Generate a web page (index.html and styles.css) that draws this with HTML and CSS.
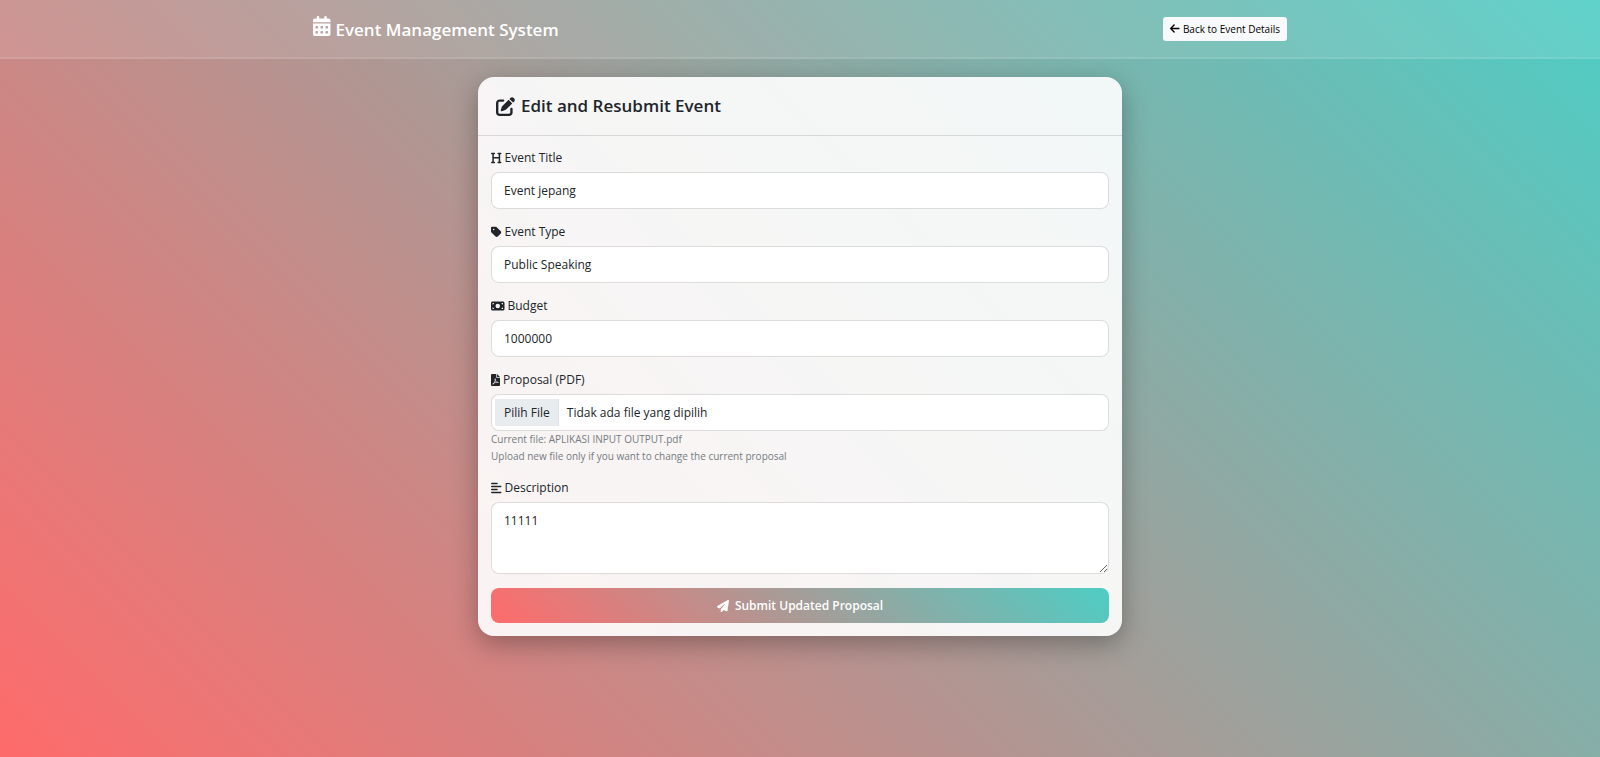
FILE: index.html
```html
<!DOCTYPE html>
<html lang="en">
<head>
<meta charset="utf-8">
<meta name="viewport" content="width=device-width, initial-scale=1">
<title>Edit and Resubmit Event</title>
<link rel="stylesheet" href="styles.css">
</head>
<body>
<header class="navbar">
  <div class="navbar-inner">
    <a class="brand" href="#">
      <svg class="icon" viewBox="0 0 448 512" aria-hidden="true"><path fill-rule="evenodd" d="M96 32a32 32 0 0 1 64 0v32h128V32a32 32 0 0 1 64 0v32h48c26.500 0 48 21.500 48 48v48H0v-48c0-26.500 21.500-48 48-48h48V32zM0 192h448v272c0 26.500-21.500 48-48 48H48c-26.500 0-48-21.500-48-48V192zm64 80v32c0 8.800 7.200 16 16 16h32c8.800 0 16-7.200 16-16v-32c0-8.800-7.200-16-16-16H80c-8.800 0-16 7.200-16 16zm128 0v32c0 8.800 7.200 16 16 16h32c8.800 0 16-7.200 16-16v-32c0-8.800-7.200-16-16-16h-32c-8.800 0-16 7.200-16 16zm144-16c-8.800 0-16 7.200-16 16v32c0 8.800 7.200 16 16 16h32c8.800 0 16-7.200 16-16v-32c0-8.800-7.200-16-16-16h-32zM64 400v32c0 8.800 7.200 16 16 16h32c8.800 0 16-7.200 16-16v-32c0-8.800-7.200-16-16-16H80c-8.800 0-16 7.200-16 16zm144-16c-8.800 0-16 7.200-16 16v32c0 8.800 7.200 16 16 16h32c8.800 0 16-7.200 16-16v-32c0-8.800-7.200-16-16-16h-32zm112 16v32c0 8.800 7.200 16 16 16h32c8.800 0 16-7.200 16-16v-32c0-8.800-7.200-16-16-16h-32c-8.800 0-16 7.200-16 16z"/></svg>
      <span>Event Management System</span>
    </a>
    <a class="back" href="#">
      <svg class="icon" viewBox="0 0 448 512" aria-hidden="true"><path d="M9.400 233.400c-12.500 12.500-12.500 32.800 0 45.300l160 160c12.500 12.500 32.800 12.500 45.300 0s12.500-32.800 0-45.300L109.200 288H416c17.700 0 32-14.300 32-32s-14.300-32-32-32H109.300l105.400-105.400c12.500-12.500 12.500-32.800 0-45.300s-32.800-12.500-45.300 0l-160 160z"/></svg>
      <span>Back to Event Details</span>
    </a>
  </div>
</header>
<main class="page">
  <section class="card">
    <h1 class="card-title">
      <svg class="icon" viewBox="0 0 512 512" aria-hidden="true"><path d="M471.600 21.700c-21.900-21.900-57.300-21.900-79.200 0L362.300 51.700l97.900 97.900 30.100-30.100c21.900-21.900 21.900-57.300 0-79.200L471.600 21.700zM172.400 241.700c-6.100 6.100-10.800 13.600-13.500 21.900l-29.600 88.800c-2.900 8.600-.6 18.100 5.800 24.600s15.900 8.700 24.600 5.800l88.800-29.600c8.200-2.800 15.700-7.400 21.900-13.500L437.700 172.300 339.700 74.300 172.400 241.700zM96 64C43 64 0 107 0 160v256c0 53 43 96 96 96h256c53 0 96-43 96-96v-96c0-17.700-14.300-32-32-32s-32 14.300-32 32v96c0 17.700-14.300 32-32 32H96c-17.700 0-32-14.300-32-32V160c0-17.700 14.300-32 32-32h96c17.700 0 32-14.300 32-32s-14.300-32-32-32H96z"/></svg>
      <span>Edit and Resubmit Event</span>
    </h1>
    <form class="form">
      <div class="field">
        <label class="label" for="title">
          <svg class="icon" viewBox="0 0 448 512" aria-hidden="true"><path d="M0 64c0-17.700 14.300-32 32-32h112c17.700 0 32 14.300 32 32s-14.300 32-32 32h-24v112h208V96h-24c-17.700 0-32-14.300-32-32s14.300-32 32-32h112c17.700 0 32 14.300 32 32s-14.300 32-32 32h-24v320h24c17.700 0 32 14.300 32 32s-14.300 32-32 32H304c-17.700 0-32-14.300-32-32s14.300-32 32-32h24V272H120v144h24c17.700 0 32 14.300 32 32s-14.300 32-32 32H32c-17.700 0-32-14.300-32-32s14.300-32 32-32h24V96H32C14.300 96 0 81.700 0 64z"/></svg>
          <span>Event Title</span>
        </label>
        <input class="control" id="title" type="text" value="Event jepang">
      </div>
      <div class="field">
        <label class="label" for="type">
          <svg class="icon" viewBox="0 0 448 512" aria-hidden="true"><path d="M0 80v149.500c0 17 6.700 33.300 18.700 45.300l176 176c25 25 65.500 25 90.500 0l133.500-133.500c25-25 25-65.500 0-90.500l-176-176c-12-12-28.300-18.700-45.300-18.700H48C21.500 32 0 53.500 0 80zm112 32a32 32 0 1 1 0 64 32 32 0 1 1 0-64z"/></svg>
          <span>Event Type</span>
        </label>
        <input class="control" id="type" type="text" value="Public Speaking">
      </div>
      <div class="field">
        <label class="label" for="budget">
          <svg class="icon" viewBox="0 0 576 512" aria-hidden="true"><path d="M64 64C28.700 64 0 92.700 0 128v256c0 35.300 28.700 64 64 64h448c35.300 0 64-28.700 64-64V128c0-35.300-28.700-64-64-64H64zm64 320H64v-64c35.300 0 64 28.700 64 64zM64 192v-64h64c0 35.300-28.700 64-64 64zm384 192c0-35.300 28.700-64 64-64v64h-64zm64-192c-35.300 0-64-28.700-64-64h64v64zM288 160a96 96 0 1 1 0 192 96 96 0 1 1 0-192z"/></svg>
          <span>Budget</span>
        </label>
        <input class="control" id="budget" type="text" inputmode="numeric" value="1000000">
      </div>
      <div class="field">
        <label class="label" for="proposal">
          <svg class="icon" viewBox="0 0 384 512" aria-hidden="true"><path d="M181.900 256.100c-5-16-4.900-46.900-2-46.900 8.400 0 7.600 36.900 2 46.900zm-1.700 47.200c-7.700 20.200-17.300 43.300-28.400 62.700 18.300-7 39-17.200 62.900-21.900-12.700-9.600-24.900-23.400-34.500-40.800zM86.100 428.100c0 .8 13.200-5.400 34.900-40.200-6.700 6.300-29.100 24.500-34.900 40.200zM248 160h136v304c0 26.500-21.500 48-48 48H48c-26.500 0-48-21.500-48-48V48C0 21.500 21.500 0 48 0h176v136c0 13.200 10.800 24 24 24zm-8 171.800c-20-12.200-33.300-29-42.700-53.800 4.500-18.500 11.600-46.600 6.200-64.200-4.700-29.400-42.400-26.500-47.800-6.800-5 18.300-.4 44.100 8.100 77-11.600 27.600-28.700 64.600-40.800 85.800-.1 0-.1.100-.2.100-27.100 13.900-73.600 44.500-54.500 68 5.600 6.900 16 10 21.500 10 17.900 0 35.700-18 61.100-61.800 25.800-8.500 54.100-19.100 79-23.200 21.700 11.800 47.100 19.500 64 19.500 29.200 0 31.200-32 19.700-43.400-13.900-13.600-54.300-9.700-73.600-7.200zM256 0l128 128H256V0zm46.100 360.300c4.100-2.700-2.500-11.900-42.800-9 37.100 15.800 42.800 9 42.800 9z"/></svg>
          <span>Proposal (PDF)</span>
        </label>
        <div class="file">
          <input class="file-input" id="proposal" type="file" accept="application/pdf">
          <span class="file-button" aria-hidden="true">Pilih File</span>
          <span class="file-name" aria-hidden="true">Tidak ada file yang dipilih</span>
        </div>
        <p class="help">Current file: APLIKASI INPUT OUTPUT.pdf<br>Upload new file only if you want to change the current proposal</p>
      </div>
      <div class="field">
        <label class="label" for="description">
          <svg class="icon" viewBox="0 0 448 512" aria-hidden="true"><path d="M288 64c0 17.700-14.300 32-32 32H32C14.300 96 0 81.700 0 64s14.300-32 32-32h224c17.700 0 32 14.300 32 32zm0 256c0 17.700-14.300 32-32 32H32c-17.700 0-32-14.300-32-32s14.300-32 32-32h224c17.700 0 32 14.300 32 32zM0 192c0-17.700 14.300-32 32-32h384c17.700 0 32 14.300 32 32s-14.300 32-32 32H32c-17.700 0-32-14.300-32-32zm448 256c0 17.700-14.300 32-32 32H32c-17.700 0-32-14.300-32-32s14.300-32 32-32h384c17.700 0 32 14.300 32 32z"/></svg>
          <span>Description</span>
        </label>
        <textarea class="control" id="description" rows="3">11111</textarea>
      </div>
      <button class="submit" type="submit">
        <svg class="icon" viewBox="0 0 512 512" aria-hidden="true"><path d="M498.100 5.600c10.100 7 15.400 19.100 13.500 31.200l-64 416c-1.500 9.700-7.400 18.200-16 23s-18.900 5.400-28 1.600L284 427.700l-68.500 74.100c-8.900 9.700-22.900 12.900-35.200 8.100S160 493.200 160 480v-83.600c0-4 1.500-7.800 4.200-10.700l167.600-182.900c5.800-6.300 5.600-16-.4-22s-15.700-6.400-22-.7L106 360.800 17.700 316.600C7.100 311.300.3 300.700 0 288.900s5.900-22.800 16.100-28.700l448-256c10.700-6.100 23.900-5.500 34 1.400z"/></svg>
        <span>Submit Updated Proposal</span>
      </button>
    </form>
  </section>
</main>
</body>
</html>
```
FILE: styles.css
```css
* {
  box-sizing: border-box;
}

body {
  min-height: 100vh;
  margin: 0;
  background: linear-gradient(45deg, #ff6b6b, #4ecdc4) no-repeat;
  color: #212529;
  font-family: "Open Sans", "Noto Sans", sans-serif;
  font-size: 12px;
  line-height: 17px;
}

.icon {
  height: 1em;
  flex: none;
  fill: currentColor;
}

.navbar {
  padding: 16px 24px;
  border-bottom: 2px solid rgba(255, 255, 255, 0.1);
  background: rgba(255, 255, 255, 0.1);
}

.navbar-inner {
  display: flex;
  align-items: center;
  justify-content: space-between;
  max-width: 974px;
  margin: 0 auto;
}

.brand {
  display: flex;
  align-items: baseline;
  gap: 5px;
  color: #fff;
  font-size: 17px;
  font-weight: 600;
  line-height: 22px;
  text-decoration: none;
}

.brand .icon {
  height: 20px;
}

.back {
  display: flex;
  align-items: center;
  gap: 3px;
  padding: 3px 7px;
  border-radius: 3px;
  background: #f8f9fa;
  color: #000;
  font-size: 10px;
  line-height: 18px;
  text-decoration: none;
}

.back .icon {
  height: 11px;
}

.page {
  padding: 18px 16px;
}

.card {
  max-width: 644px;
  margin: 0 auto;
  border-radius: 16px;
  background: rgba(255, 255, 255, 0.9);
  box-shadow: 0 8px 26px rgba(0, 0, 0, 0.3);
}

.card-title {
  display: flex;
  align-items: center;
  gap: 6px;
  margin: 0;
  padding: 17px 18px;
  border-bottom: 1px solid rgba(0, 0, 0, 0.12);
  font-size: 17px;
  font-weight: 600;
  line-height: 24px;
}

.card-title .icon {
  height: 19px;
}

.form {
  display: flex;
  flex-direction: column;
  gap: 14px;
  padding: 13px;
}

.label {
  display: flex;
  align-items: center;
  gap: 3px;
  margin-bottom: 6px;
}

.control {
  display: block;
  width: 100%;
  padding: 9px 12px;
  border: 1px solid rgba(0, 0, 0, 0.1);
  border-radius: 8px;
  background: #fff;
  background-clip: padding-box;
  color: #212529;
  font: inherit;
}

textarea.control {
  min-height: 72px;
  resize: vertical;
}

.file {
  position: relative;
  display: flex;
  align-items: center;
  gap: 8px;
  padding: 4px 3px;
  border: 1px solid rgba(0, 0, 0, 0.1);
  border-radius: 8px;
  background: #fff;
  background-clip: padding-box;
}

.file-input {
  position: absolute;
  inset: 0;
  width: 100%;
  height: 100%;
  opacity: 0;
  cursor: pointer;
}

.file-button {
  padding: 5px 8px 5px 9px;
  border-right: 1px solid #dee2e6;
  background: #e9ecef;
}

.help {
  margin: 0;
  color: #757b81;
  font-size: 10px;
}

.submit {
  display: flex;
  align-items: center;
  justify-content: center;
  gap: 6px;
  padding: 9px 16px;
  border: 0;
  border-radius: 8px;
  background: linear-gradient(45deg, #ff6b6b, #4ecdc4);
  color: #fff;
  font: inherit;
  font-weight: 600;
}
```
